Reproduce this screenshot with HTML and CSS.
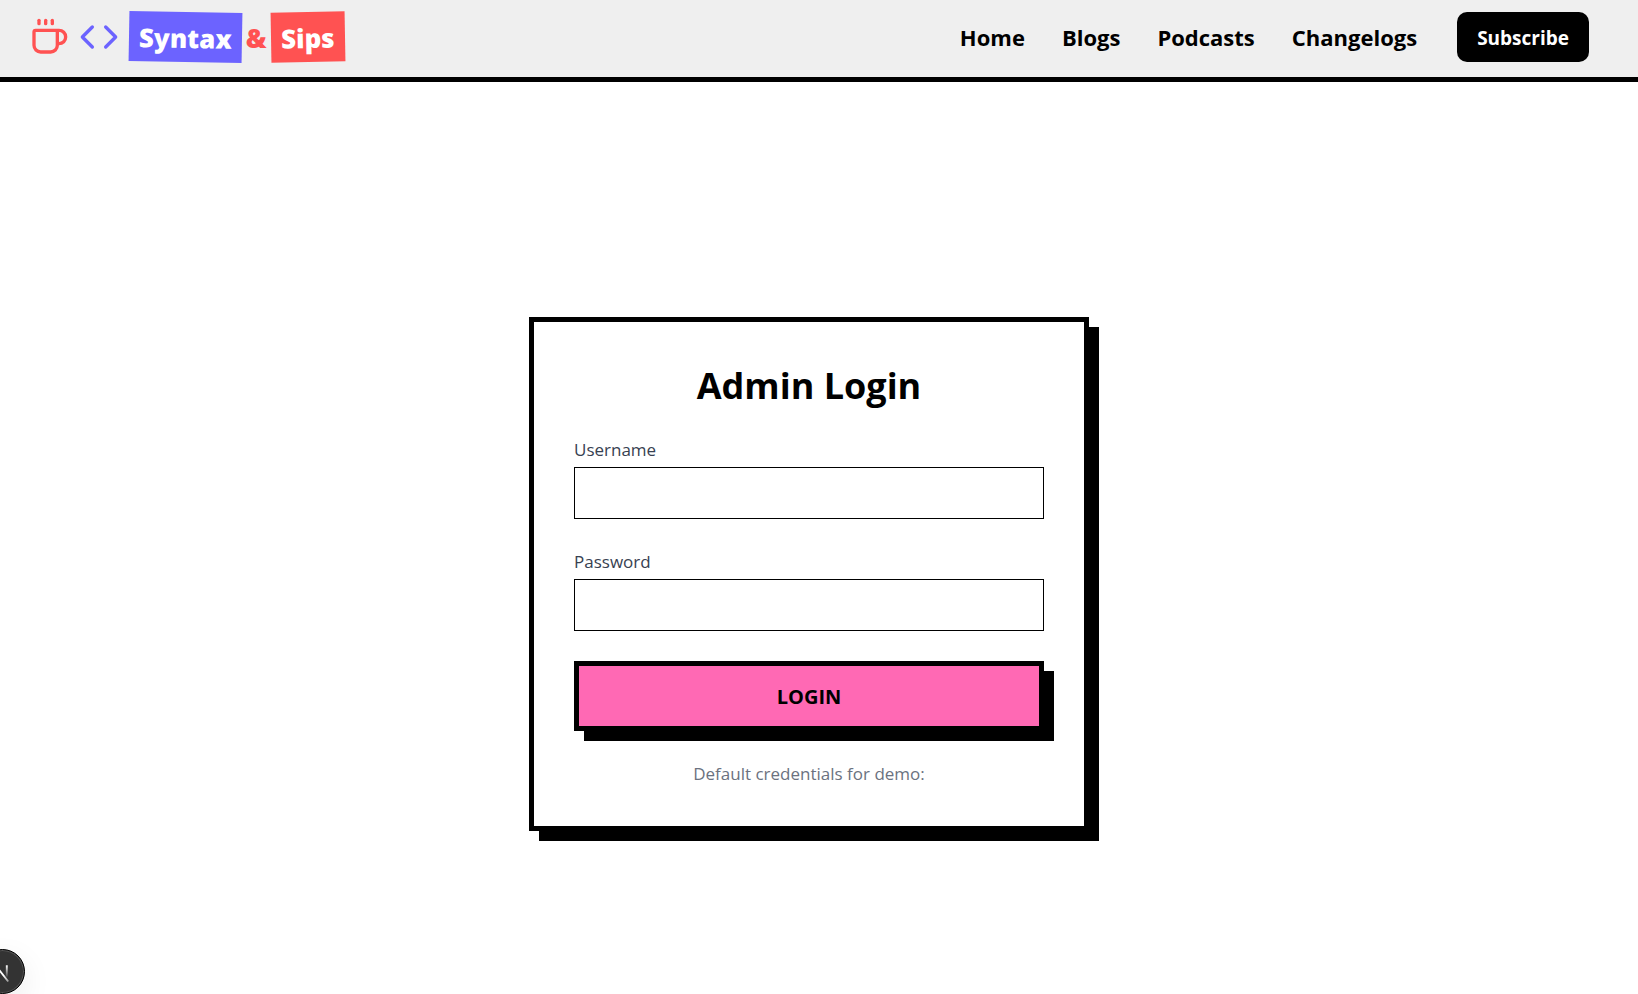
FILE: index.html
```html
<!DOCTYPE html>
<html lang="en">
<head>
  <meta charset="utf-8">
  <meta name="viewport" content="width=device-width, initial-scale=1">
  <title>Syntax &amp; Sips</title>
  <link rel="stylesheet" href="styles.css">
</head>
<body>
  <header class="site-header">
    <a class="brand" href="#">
      <svg class="icon icon-cup" viewBox="0 0 24 24" aria-hidden="true">
        <path d="M10 2v2"/><path d="M14 2v2"/><path d="M6 2v2"/>
        <path d="M16 8a1 1 0 0 1 1 1v8a4 4 0 0 1-4 4H7a4 4 0 0 1-4-4V9a1 1 0 0 1 1-1h14a4 4 0 1 1 0 8h-1"/>
      </svg>
      <svg class="icon icon-code" viewBox="0 0 24 24" aria-hidden="true">
        <path d="m16 18 6-6-6-6"/><path d="m8 6-6 6 6 6"/>
      </svg>
      <span class="wordmark">
        <span class="tag tag-syntax">Syntax</span>
        <span class="amp">&amp;</span>
        <span class="tag tag-sips">Sips</span>
      </span>
    </a>
    <nav class="nav">
      <div class="nav-links">
        <a class="nav-link" href="#">Home</a>
        <a class="nav-link" href="#">Blogs</a>
        <a class="nav-link" href="#">Podcasts</a>
        <a class="nav-link" href="#">Changelogs</a>
      </div>
      <button class="subscribe" type="button">Subscribe</button>
    </nav>
  </header>
  <main class="page">
    <form class="card">
      <h1 class="title">Admin Login</h1>
      <div class="field">
        <label class="label" for="username">Username</label>
        <input class="input" id="username" type="text">
      </div>
      <div class="field">
        <label class="label" for="password">Password</label>
        <input class="input" id="password" type="password">
      </div>
      <button class="login" type="submit">LOGIN</button>
      <p class="hint">Default credentials for demo:</p>
    </form>
  </main>
  <button class="dev-badge" type="button" aria-label="Developer tools">
    <svg class="dev-mark" viewBox="0 0 45 45" aria-hidden="true">
      <defs>
        <linearGradient id="fade-v" x1="0" y1="0" x2="0" y2="1">
          <stop offset="0" stop-color="#fff"/><stop offset="1" stop-color="#fff" stop-opacity="0.1"/>
        </linearGradient>
        <linearGradient id="fade-d" x1="0" y1="0" x2="1" y2="1">
          <stop offset="0.6" stop-color="#fff"/><stop offset="1" stop-color="#fff" stop-opacity="0.5"/>
        </linearGradient>
      </defs>
      <path d="M16 33V17L28.500 33" fill="none" stroke="url(#fade-d)" stroke-width="2"/>
      <rect x="26" y="16" width="2" height="12" fill="url(#fade-v)"/>
    </svg>
  </button>
</body>
</html>
```
FILE: styles.css
```css
* {
  box-sizing: border-box;
}

body {
  margin: 0;
  min-height: 100vh;
  display: flex;
  flex-direction: column;
  background: #fff;
  color: #000;
  font-family: "Segoe UI", "Open Sans", "Noto Sans", sans-serif;
}

.site-header {
  display: flex;
  align-items: center;
  justify-content: space-between;
  min-height: 82px;
  padding: 0 49px 3px 29px;
  background: #efefef;
  border-bottom: 5px solid #000;
}

.brand {
  display: flex;
  align-items: center;
  gap: 10px;
  text-decoration: none;
}

.icon {
  width: 40px;
  height: 40px;
  fill: none;
  stroke-width: 2;
  stroke-linecap: round;
  stroke-linejoin: round;
}

.icon-cup {
  stroke: #ff5252;
}

.icon-code {
  stroke: #6c63ff;
}

.wordmark {
  display: flex;
  align-items: center;
  gap: 4px;
  font-size: 26px;
  font-weight: 800;
  line-height: 38px;
}

.tag {
  padding: 7px 10px 5px;
  color: #fff;
}

.tag-syntax {
  background: #6c63ff;
  transform: rotate(1deg);
}

.tag-sips {
  background: #ff5252;
  transform: rotate(-1deg);
}

.amp {
  padding-top: 2px;
  color: #ff5252;
}

.nav {
  display: flex;
  align-items: center;
  gap: 40px;
}

.nav-links {
  display: flex;
  align-items: center;
  gap: 37px;
}

.nav-link {
  color: #000;
  font-size: 22px;
  font-weight: 700;
  line-height: 30px;
  text-decoration: none;
}

.subscribe {
  padding: 11px 20px 9px;
  border: 0;
  border-radius: 10px;
  background: #000;
  color: #fff;
  font: inherit;
  font-size: 19px;
  font-weight: 700;
  line-height: 30px;
}

.page {
  flex: 1;
  display: flex;
  align-items: center;
  justify-content: center;
  padding: 72px 20px 0 0;
}

.card {
  display: flex;
  flex-direction: column;
  gap: 30px;
  width: 560px;
  padding: 40px;
  background: #fff;
  border: 5px solid #000;
  box-shadow: 10px 10px 0 #000;
}

.title {
  margin: 0;
  padding-top: 3px;
  font-size: 36px;
  font-weight: 700;
  line-height: 42px;
  text-align: center;
}

.field {
  display: flex;
  flex-direction: column;
  gap: 5px;
}

.label {
  color: #374151;
  font-size: 17px;
  line-height: 25px;
}

.input {
  width: 100%;
  height: 52px;
  padding: 10px 15px;
  background: #fff;
  border: 1px solid #000;
  border-radius: 0;
  font: inherit;
  font-size: 17px;
}

.login {
  padding: 16px 20px 14px;
  background: #ff69b4;
  border: 5px solid #000;
  box-shadow: 10px 10px 0 #000;
  color: #000;
  font: inherit;
  font-size: 20px;
  font-weight: 700;
  line-height: 30px;
}

.hint {
  margin: 0;
  color: #6b7280;
  font-size: 17px;
  line-height: 25px;
  text-align: center;
}

.dev-badge {
  position: fixed;
  left: -20px;
  bottom: 0;
  width: 45px;
  height: 45px;
  padding: 0;
  border: 1px solid #000;
  border-radius: 50%;
  background: #333;
  box-shadow: inset 0 0 0 1px #555, 0 10px 30px rgba(0, 0, 0, 0.08);
}

.dev-mark {
  display: block;
  width: 100%;
  height: 100%;
}
```
